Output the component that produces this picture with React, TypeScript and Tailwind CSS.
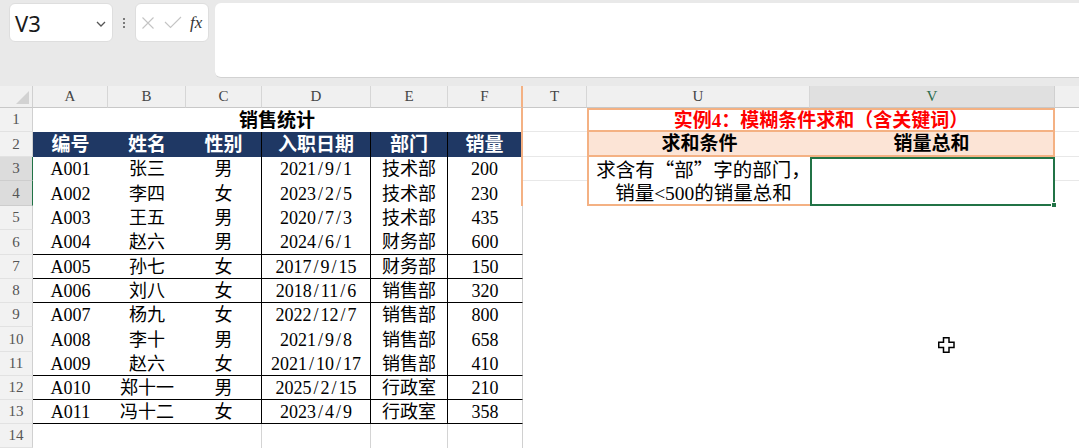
import React from "react";

const SERIF = "font-['Liberation_Serif','Noto_Sans_CJK_SC',serif]";

type Rec = { id: string; name: string; sex: string; date: string; dept: string; sales: string };

const data: Rec[] = [
  { id: "A001", name: "张三", sex: "男", date: "2021/9/1", dept: "技术部", sales: "200" },
  { id: "A002", name: "李四", sex: "女", date: "2023/2/5", dept: "技术部", sales: "230" },
  { id: "A003", name: "王五", sex: "男", date: "2020/7/3", dept: "技术部", sales: "435" },
  { id: "A004", name: "赵六", sex: "男", date: "2024/6/1", dept: "财务部", sales: "600" },
  { id: "A005", name: "孙七", sex: "女", date: "2017/9/15", dept: "财务部", sales: "150" },
  { id: "A006", name: "刘八", sex: "女", date: "2018/11/6", dept: "销售部", sales: "320" },
  { id: "A007", name: "杨九", sex: "女", date: "2022/12/7", dept: "销售部", sales: "800" },
  { id: "A008", name: "李十", sex: "男", date: "2021/9/8", dept: "销售部", sales: "658" },
  { id: "A009", name: "赵六", sex: "女", date: "2021/10/17", dept: "销售部", sales: "410" },
  { id: "A010", name: "郑十一", sex: "男", date: "2025/2/15", dept: "行政室", sales: "210" },
  { id: "A011", name: "冯十二", sex: "女", date: "2023/4/9", dept: "行政室", sales: "358" },
];

const BLACK_BOTTOM = new Set([6, 7, 8, 11, 12, 13]);

function DateText({ s }: { s: string }) {
  const parts = s.split("/");
  return (
    <span className="inline-flex items-center">
      {parts.map((p, i) => (
        <React.Fragment key={i}>
          {i > 0 && <span className="px-[2px]">/</span>}
          {p}
        </React.Fragment>
      ))}
    </span>
  );
}

function TopBar() {
  return (
    <div className="h-[86px] bg-[#e9e9e9] flex items-start pt-[3px] pl-[9px] overflow-hidden shrink-0">
      <div className="w-[104px] h-[39px] bg-white rounded-[6px] border border-[#dedede] flex items-center justify-between pl-[5px] pr-[6px]">
        <span className="font-['Noto_Sans',sans-serif] text-[22px] leading-none text-[#1a1a1a]">V3</span>
        <svg width="10" height="6" viewBox="0 0 10 6" className="mt-[2px]">
          <polyline points="1,1 5,5 9,1" fill="none" stroke="#555" strokeWidth="1.3" />
        </svg>
      </div>
      <div className="w-[22px] h-[39px] flex flex-col items-center justify-center gap-[2px]">
        <span className="w-[2px] h-[2px] bg-[#555] rounded-full" />
        <span className="w-[2px] h-[2px] bg-[#555] rounded-full" />
        <span className="w-[2px] h-[2px] bg-[#555] rounded-full" />
      </div>
      <div className="w-[74px] h-[39px] bg-white rounded-[6px] border border-[#dedede] flex items-center pl-[5px]">
        <svg width="14" height="14" viewBox="0 0 14 14">
          <path d="M1.5 1.5 L12.5 12.5 M12.5 1.5 L1.5 12.5" stroke="#c4c4c4" strokeWidth="1.1" fill="none" />
        </svg>
        <svg width="18" height="13" viewBox="0 0 18 13" className="ml-[9px]">
          <polyline points="1,6 6.5,11.5 17,1" fill="none" stroke="#c4c4c4" strokeWidth="1.1" />
        </svg>
        <span className="ml-[8px] font-['Liberation_Serif',serif] italic text-[17px] leading-none text-[#333]">fx</span>
      </div>
      <div className="ml-[6px] flex-1 h-[75px] bg-white rounded-l-[6px] border-b border-b-[#d2d2d2] -mr-[10px]" />
    </div>
  );
}

function RowHead({ r }: { r: number }) {
  const sel = r === 3 || r === 4;
  return (
    <div
      className={`flex items-center justify-center text-[15px] leading-none text-[#555] border-r border-b ${
        sel
          ? "bg-[#dcdcdc] border-r-[#217346] border-b-[#cdcdcd]"
          : "bg-[#f2f2f2] border-r-[#d0d0d0] border-b-[#e2e2e2]"
      }`}
    >
      {r}
    </div>
  );
}

const base = "flex items-center justify-center text-[18px] leading-none whitespace-nowrap";
const faintB = "border-b border-b-[#e8e8e8]";

export default function App() {
  const letters = ["A", "B", "C", "D", "E", "F", "T", "U", "V"];
  const cells: React.ReactNode[] = [];

  // header row
  cells.push(
    <div key="corner" className="bg-[#f0f0f0] border-r border-b border-r-[#d0d0d0] border-b-[#c8c8c8] flex items-end justify-end p-[3px]">
      <svg width="13" height="13" viewBox="0 0 13 13">
        <polygon points="13,0 13,13 0,13" fill="#d2d2d2" />
      </svg>
    </div>
  );
  letters.forEach((l) => {
    let cls =
      "flex items-center justify-center text-[15px] leading-none border-b border-b-[#c8c8c8] ";
    if (l === "F") cls += "border-r-2 border-r-[#f4b183] bg-[#f0f0f0] text-[#444]";
    else if (l === "V") cls += "border-r border-r-[#d0d0d0] bg-[#e0e0e0] text-[#2a6b4c]";
    else cls += "border-r border-r-[#d6d6d6] bg-[#f0f0f0] text-[#444]";
    cells.push(
      <div key={"h" + l} className={cls}>
        {l}
      </div>
    );
  });
  cells.push(<div key="hW" className="bg-[#f0f0f0] border-b border-b-[#c8c8c8]" />);

  // row 1
  cells.push(<RowHead key="r1" r={1} />);
  cells.push(
    <div key="t1" className={`${base} col-span-6 text-[19px] font-bold text-black border-r-2 border-r-[#f4b183]`}>
      销售统计
    </div>
  );
  cells.push(<div key="T1" className={faintB} />);
  cells.push(
    <div
      key="uv1"
      className={`${base} col-span-2 border-2 border-[#f4b183] text-[19px] font-bold text-[#ff0000]`}
    >
      实例4：模糊条件求和（含关键词）
    </div>
  );
  cells.push(<div key="W1" className={faintB} />);

  // row 2
  cells.push(<RowHead key="r2" r={2} />);
  const heads = ["编号", "姓名", "性别", "入职日期", "部门", "销量"];
  heads.forEach((h, i) => {
    let cls = `${base} bg-[#1f3864] text-white font-bold text-[19px]`;
    if (i >= 2 && i <= 4) cls += " border-r border-r-black";
    if (i === 5) cls += " border-r-2 border-r-[#f4b183]";
    cells.push(
      <div key={"hd" + i} className={cls}>
        {h}
      </div>
    );
  });
  cells.push(<div key="T2" className={faintB} />);
  cells.push(
    <div
      key="U2"
      className={`${base} bg-[#fce4d6] text-black font-bold text-[19px] border-l-2 border-b-2 border-l-[#f4b183] border-b-[#f4b183]`}
    >
      求和条件
    </div>
  );
  cells.push(
    <div
      key="V2"
      className={`${base} bg-[#fce4d6] text-black font-bold text-[19px] border-r-2 border-b-2 border-r-[#f4b183] border-b-[#f4b183]`}
    >
      销量总和
    </div>
  );
  cells.push(<div key="W2" className={faintB} />);

  // data rows 3..13
  data.forEach((d, i) => {
    const r = i + 3;
    const bottom = BLACK_BOTTOM.has(r) ? " border-b border-b-black" : "";
    const vr = " border-r border-r-black";
    const fr = r <= 4 ? " border-r-2 border-r-[#f4b183]" : " border-r border-r-[#d0d0d0]";
    cells.push(<RowHead key={"r" + r} r={r} />);
    cells.push(<div key={"a" + r} className={base + bottom}>{d.id}</div>);
    cells.push(<div key={"b" + r} className={base + bottom}>{d.name}</div>);
    cells.push(<div key={"c" + r} className={base + bottom + vr}>{d.sex}</div>);
    cells.push(
      <div key={"d" + r} className={base + bottom + vr}>
        <DateText s={d.date} />
      </div>
    );
    cells.push(<div key={"e" + r} className={base + bottom + vr}>{d.dept}</div>);
    cells.push(<div key={"f" + r} className={base + bottom + fr}>{d.sales}</div>);
    cells.push(<div key={"T" + r} className={r === 3 ? faintB : ""} />);
    if (r === 3) {
      cells.push(
        <div
          key="U3"
          className="row-span-2 flex flex-col items-center justify-center pl-[8px] text-[19.5px] leading-[23px] border-l-2 border-b-2 border-l-[#f4b183] border-b-[#f4b183] whitespace-nowrap"
        >
          <span>
            求含有<span className="font-['Noto_Sans_CJK_SC',sans-serif]">“</span>部
            <span className="font-['Noto_Sans_CJK_SC',sans-serif]">”</span>字的部门，
          </span>
          <span>销量&lt;500的销量总和</span>
        </div>
      );
      cells.push(
        <div key="V3" className="row-span-2 relative border-2 border-[#217346]">
          <span className="absolute -right-[4px] -bottom-[4px] w-[6px] h-[6px] bg-[#217346] border border-white" />
        </div>
      );
    } else if (r >= 5) {
      cells.push(<div key={"U" + r} />);
      cells.push(<div key={"V" + r} />);
    }
    cells.push(<div key={"W" + r} className={r === 3 ? faintB : ""} />);
  });

  // row 14
  cells.push(<RowHead key="r14" r={14} />);
  cells.push(<div key="a14" />);
  cells.push(<div key="b14" />);
  cells.push(<div key="c14" className="border-r border-r-[#d4d4d4]" />);
  cells.push(<div key="d14" className="border-r border-r-[#d4d4d4]" />);
  cells.push(<div key="e14" className="border-r border-r-[#d4d4d4]" />);
  cells.push(<div key="f14" className="border-r border-r-[#d0d0d0]" />);
  cells.push(<div key="T14" />);
  cells.push(<div key="U14" />);
  cells.push(<div key="V14" />);
  cells.push(<div key="W14" />);

  return (
    <div className={`relative w-[1079px] h-[448px] overflow-hidden bg-white text-black flex flex-col ${SERIF}`}>
      <TopBar />
      <div className="grid grid-cols-[33px_75px_78px_76px_109px_77px_75px_64px_223px_245px_1fr] grid-rows-[22px_24px_25px_24px_25px_24px_25px_24px_24px_24px_25px_24px_24px_24px_24px]">
        {cells}
      </div>
      <svg
        width="17"
        height="16"
        viewBox="0 0 17 16"
        className="absolute left-[938px] top-[337px]"
      >
        <path
          d="M5.5 0.75 H11 V5.25 H16 V10.5 H11 V15.25 H5.5 V10.5 H0.75 V5.25 H5.5 Z"
          fill="white"
          stroke="black"
          strokeWidth="1.5"
        />
      </svg>
    </div>
  );
}
